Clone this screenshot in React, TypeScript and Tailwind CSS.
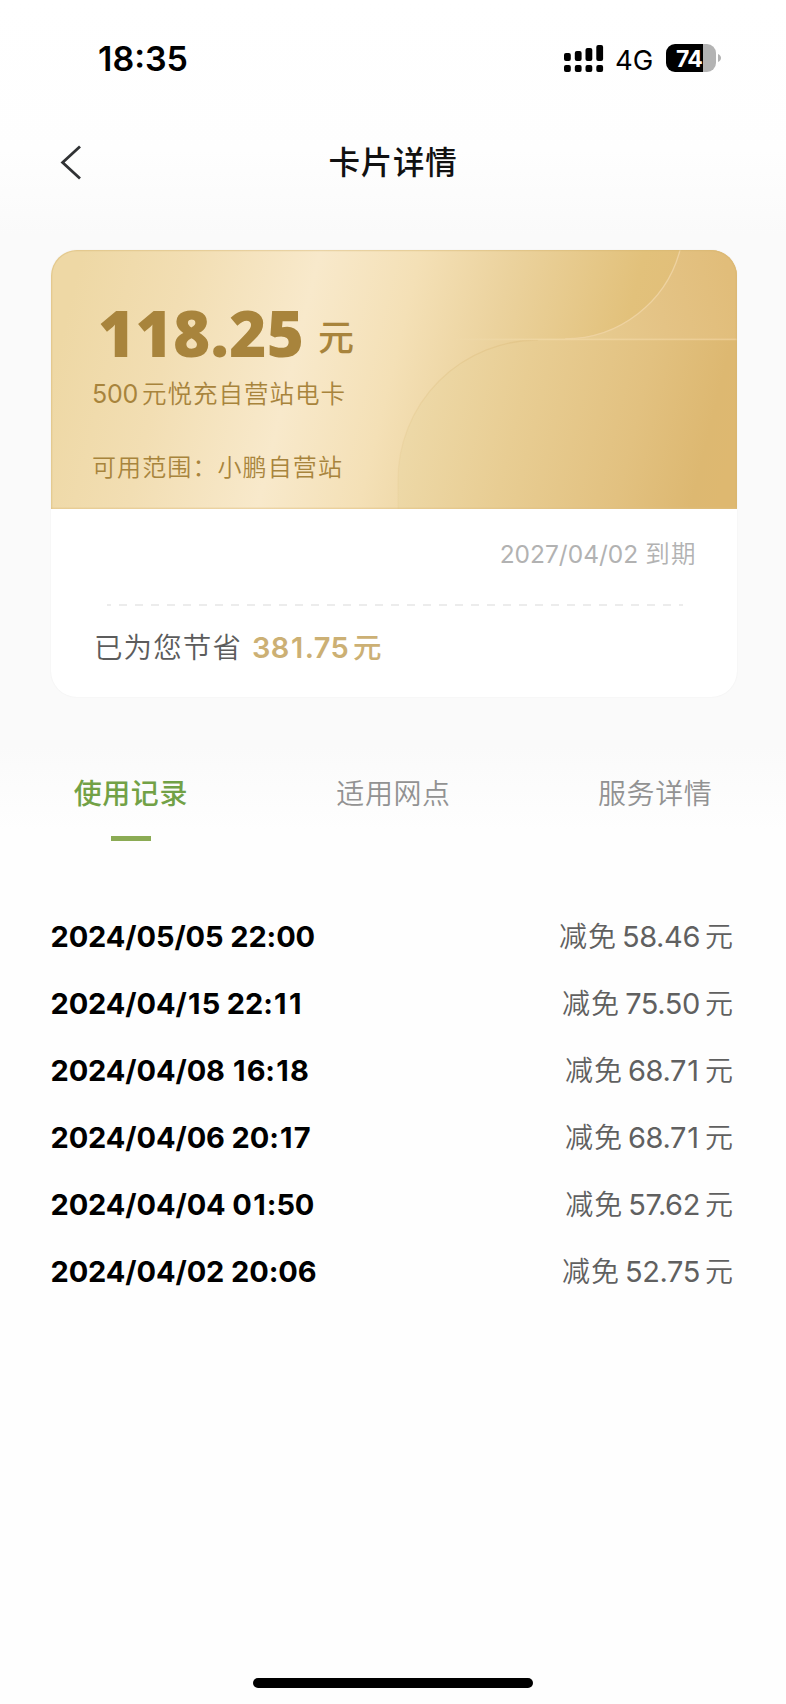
const records = [
  { time: '2024/05/05 22:00', amount: '58.46' },
  { time: '2024/04/15 22:11', amount: '75.50' },
  { time: '2024/04/08 16:18', amount: '68.71' },
  { time: '2024/04/06 20:17', amount: '68.71' },
  { time: '2024/04/04 01:50', amount: '57.62' },
  { time: '2024/04/02 20:06', amount: '52.75' },
];

// Gives the narrow "1" a little more room on both sides.
function Digits({ text }: { text: string }) {
  return (
    <>
      {text.split(/(1)/).map((part, i) =>
        part === '1' ? (
          <span key={i} className="px-[1.3px]">
            1
          </span>
        ) : (
          part
        ),
      )}
    </>
  );
}

function SignalIcon() {
  const bars = [
    { x: 0, y: 9, h: 8 },
    { x: 10.8, y: 7, h: 10 },
    { x: 21.5, y: 4, h: 13 },
    { x: 32.3, y: 1, h: 16 },
  ];
  return (
    <svg width="40" height="30" viewBox="0 0 40 30">
      {bars.map((b) => (
        <g key={b.x}>
          <rect x={b.x} y={b.y} width="6.8" height={b.h} rx="2" />
          <rect x={b.x} y="21" width="6.8" height="7" rx="2" />
        </g>
      ))}
    </svg>
  );
}

function StatusBar() {
  return (
    <div className="flex h-[118px] items-start justify-between pl-[98px] pr-[65px] pt-[39px] text-black">
      <div className="h-10 text-[34px] font-semibold leading-10">18:35</div>
      <div className="flex items-start pt-[5px]">
        <SignalIcon />
        <span className="ml-[11px] w-[40px] text-[27.5px] leading-8">4G</span>
        <div className="ml-[11px] flex h-7 w-[50px] items-center overflow-hidden rounded-[9px] bg-[linear-gradient(90deg,#000_37.5px,#b3b3b3_37.5px)] pl-[10px]">
          <span className="pt-[1px] text-[23px] font-bold leading-7 tracking-[-0.8px] text-white">74</span>
        </div>
        <svg className="ml-[2px] mt-[10px]" width="3" height="8" viewBox="0 0 3 8">
          <path d="M0 0C4 1.5 4 6.5 0 8Z" fill="#b3b3b3" />
        </svg>
      </div>
    </div>
  );
}

function CardArt() {
  return (
    <svg className="absolute inset-0 h-full w-full" viewBox="51 250 686 259" preserveAspectRatio="none">
      <defs>
        <linearGradient id="base" gradientUnits="userSpaceOnUse" x1="51" y1="379" x2="731" y2="546">
          <stop offset="0" stopColor="#eed8a5" />
          <stop offset="0.15" stopColor="#f2deb3" />
          <stop offset="0.33" stopColor="#f8e9cb" />
          <stop offset="0.47" stopColor="#f4e0b6" />
          <stop offset="0.6" stopColor="#ebd29d" />
          <stop offset="0.78" stopColor="#e2c17b" />
          <stop offset="1" stopColor="#dfb974" />
        </linearGradient>
        <linearGradient id="lower" gradientUnits="userSpaceOnUse" x1="400" y1="400" x2="725" y2="480">
          <stop offset="0" stopColor="#eedaaa" />
          <stop offset="0.35" stopColor="#e8cd93" />
          <stop offset="0.7" stopColor="#e2c180" />
          <stop offset="0.92" stopColor="#ddb871" />
          <stop offset="1" stopColor="#deb870" />
        </linearGradient>
        <linearGradient id="corner" gradientUnits="userSpaceOnUse" x1="590" y1="335" x2="735" y2="300">
          <stop offset="0" stopColor="#e7cb90" />
          <stop offset="0.5" stopColor="#e4c385" />
          <stop offset="1" stopColor="#e1bd7a" />
        </linearGradient>
        <linearGradient id="seam" gradientUnits="userSpaceOnUse" x1="450" y1="0" x2="737" y2="0">
          <stop offset="0" stopColor="#f2dfb4" stopOpacity="0" />
          <stop offset="0.35" stopColor="#efd6a2" />
          <stop offset="1" stopColor="#ebcb92" />
        </linearGradient>
        <linearGradient id="edge" gradientUnits="userSpaceOnUse" x1="398" y1="509" x2="540" y2="340">
          <stop offset="0" stopColor="#e3c88f" stopOpacity="0.2" />
          <stop offset="1" stopColor="#dfc082" stopOpacity="0.6" />
        </linearGradient>
      </defs>
      <rect x="51" y="250" width="686" height="259" fill="url(#base)" />
      <path d="M680.3 249A119 119 0 0 1 565 338.8L737 339.8V249Z" fill="url(#corner)" />
      <path d="M398 509V480A140 140 0 0 1 538 340H737V509Z" fill="url(#lower)" />
      <path d="M398 509V480A140 140 0 0 1 538 340" fill="none" stroke="url(#edge)" strokeWidth="1.3" />
      <path d="M680.3 249A119 119 0 0 1 565 338.8" fill="none" stroke="#eed2a0" strokeWidth="1.3" />
      <rect x="450" y="338.6" width="287" height="1.6" fill="url(#seam)" />
      <path
        d="M51.6 509V276A25.4 25.4 0 0 1 77 250.6H711A25.4 25.4 0 0 1 736.4 276V509"
        fill="none"
        stroke="#d5b36f"
        strokeOpacity="0.4"
        strokeWidth="1.4"
      />
      <rect x="51" y="507.6" width="686" height="1.4" fill="#dfc07f" fillOpacity="0.5" />
    </svg>
  );
}

function BalanceCard() {
  return (
    <section className="ml-[51px] mt-[50px] w-[686px] overflow-hidden rounded-[26px] bg-white shadow-[0_0_2px_rgba(0,0,0,0.06)]">
      <div className="relative h-[259px] text-[#a8843c]">
        <CardArt />
        <div className="relative flex flex-col pl-[41px] pt-[48px]">
          <div className="flex h-[70px] items-baseline pl-[6px]">
            <span className="w-[213px] font-['Open_Sans'] text-[63.5px] font-extrabold leading-[70px] tracking-[0.3px]">118.25</span>
            <span className="relative -top-[6px] ml-[7px] text-[36px] font-medium leading-[40px]">元</span>
          </div>
          <div className="mt-[9px] flex h-[34px] items-baseline text-[24.5px] font-[350] leading-[34px] tracking-[1px]">
            <span className="w-[50px] text-[25px] font-[380] tracking-[-0.2px]">500</span>
            <span>元悦充自营站电卡</span>
          </div>
          <div className="mt-[40px] h-[34px] text-[24px] font-[350] leading-[34px] tracking-[1.1px]">可用范围：小鹏自营站</div>
        </div>
      </div>
      <div className="h-[188px] pl-[43px] pr-[40px] pt-[28px]">
        <div className="flex h-[34px] items-baseline justify-end text-[24.5px] font-[350] leading-[34px] text-[#b2b2b2]">
          <span className="mr-[7px] font-normal">2027/04/02</span>
          <span className="tracking-[1.4px]">到期</span>
        </div>
        <div className="ml-[13px] mr-[14px] mt-[33px] h-[2px] bg-[repeating-linear-gradient(90deg,#ececec_0_4px,transparent_4px_12px,#ececec_12px_16px)]" />
        <div className="mt-[22px] flex h-10 items-baseline leading-10">
          <span className="w-[158px] text-[28.5px] font-[350] tracking-[1.1px] text-[#5c5c5c]">已为您节省</span>
          <span className="w-[101px] text-[29px] font-semibold tracking-[0.3px] text-[#ccb074]">
            <Digits text="381.75" />
          </span>
          <span className="text-[28.5px] font-medium text-[#ccb074]">元</span>
        </div>
      </div>
    </section>
  );
}

function Tabs() {
  return (
    <nav className="ml-[1px] mt-[77px] grid h-[70px] grid-cols-3 text-center text-[28px] font-[350] leading-10 tracking-[0.6px] text-[#929292]">
      <div className="flex flex-col items-center pr-[2px]">
        <span className="font-medium text-[#72a146]">使用记录</span>
        <span className="mt-[22px] h-[4.5px] w-10 bg-[#8bab54]" />
      </div>
      <div>适用网点</div>
      <div>服务详情</div>
    </nav>
  );
}

export default function App() {
  return (
    <div className="flex h-[1704px] w-[786px] flex-col overflow-hidden bg-[linear-gradient(180deg,#fff_0px,#fefefe_150px,#fafafa_235px,#fafafa_745px,#fefefe_830px,#fefefe_100%)] font-[Inter,'Noto_Sans_CJK_SC',sans-serif]">
      <StatusBar />
      <header className="grid h-[82px] grid-cols-3 items-center pt-[7px]">
        <svg className="ml-[59px]" width="24" height="36" viewBox="0 0 24 36" fill="none" stroke="#303234" strokeWidth="2.8">
          <path d="M21 1.5L3.6 17.5L21 33.5" />
        </svg>
        <h1 className="text-center text-[31.5px] font-medium leading-[44px] tracking-[0.8px] text-[#111]">卡片详情</h1>
      </header>
      <BalanceCard />
      <Tabs />
      <main className="mt-[59px] flex flex-col pl-[50.5px] pr-[53px]">
        {records.map((r) => (
          <div key={r.time} className="flex h-[67px] items-baseline justify-between leading-[67px]">
            <span className="text-[29px] font-bold tracking-[-0.1px] text-black">
              <Digits text={r.time} />
            </span>
            <span className="flex items-baseline text-[28px] font-[350] text-[#606060]">
              <span className="tracking-[1px]">减免</span>
              <span className="ml-[5px] mr-[5px] text-[29px] font-normal tracking-[-0.4px]">
                <Digits text={r.amount} />
              </span>
              <span>元</span>
            </span>
          </div>
        ))}
      </main>
      <div className="mx-auto mb-[16px] mt-auto h-[10px] w-[280px] rounded-full bg-black" />
    </div>
  );
}
